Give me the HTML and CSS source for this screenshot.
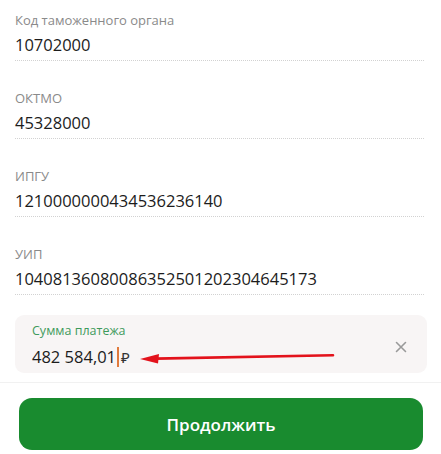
FILE: index.html
```html
<!DOCTYPE html>
<html lang="ru">
<head>
<meta charset="utf-8">
<link rel="stylesheet" href="styles.css">
</head>
<body>
<div class="page">
  <div class="list">
    <div class="field">
      <div class="label">Код таможенного органа</div>
      <div class="value">10702000</div>
    </div>
    <div class="field">
      <div class="label">ОКТМО</div>
      <div class="value">45328000</div>
    </div>
    <div class="field">
      <div class="label">ИПГУ</div>
      <div class="value">1210000000434536236140</div>
    </div>
    <div class="field">
      <div class="label">УИП</div>
      <div class="value">10408136080086352501202304645173</div>
    </div>
  </div>

  <div class="amount">
    <div class="amount-text">
      <div class="amount-label">Сумма платежа</div>
      <div class="amount-value">482 584,01<span class="caret"></span><span class="rub">₽</span></div>
    </div>
    <svg class="clear" width="12" height="12" viewBox="0 0 12 12"><path d="M1.5 1.5 L10.5 10.5 M10.5 1.5 L1.5 10.5" stroke="#9a9a9a" stroke-width="1.6" stroke-linecap="round"/></svg>
    <svg class="arrow" width="200" height="14" viewBox="0 0 200 14"><path d="M16 7.6 L193 4.2" stroke="#e3121b" stroke-width="2.6" stroke-linecap="round"/><path d="M0 8 L19 3 L18 12.5 Z" fill="#e3121b"/></svg>
  </div>

  <div class="divider"></div>

  <div class="actions">
    <button class="btn">Продолжить</button>
  </div>
</div>
</body>
</html>
```

FILE: styles.css
```css
* { box-sizing: border-box; }
html, body { margin: 0; padding: 0; background: #ffffff; }
body {
  font-family: "Open Sans", "Noto Sans", sans-serif;
  width: 441px;
  height: 454px;
  overflow: hidden;
}
.page { display: flex; flex-direction: column; }
.list { padding: 0 17px 0 15px; display: flex; flex-direction: column; }
.field {
  padding: 27px 0 3px 0;
  border-bottom: 1px dotted #d2d2d2;
  display: flex;
  flex-direction: column;
}
.field:first-child { padding-top: 10px; }
.label {
  font-size: 13px;
  line-height: 20px;
  color: #8a8a8a;
}
.value {
  margin-top: 3px;
  font-size: 16.5px;
  line-height: 24px;
  color: #1c1c1c;
}
.amount {
  position: relative;
  margin: 20px 14px 0 15px;
  height: 58px;
  background: #f8f5f5;
  border-radius: 9px;
  padding: 7px 20px 4px 17px;
  display: flex;
  align-items: center;
  justify-content: space-between;
}
.amount-text { display: flex; flex-direction: column; align-self: stretch; }
.amount-label {
  font-size: 12.5px;
  line-height: 18px;
  color: #3f9a5c;
}
.amount-value {
  margin-top: 5px;
  font-size: 16.5px;
  line-height: 24px;
  color: #1c1c1c;
  display: flex;
  align-items: center;
}
.caret {
  display: inline-block;
  width: 2px;
  height: 20px;
  background: #e07a3c;
  margin: 0 2px 0 1px;
}
.rub { font-size: 15px; color: #333; }
.clear { margin-top: 2px; }
.arrow { position: absolute; left: 125px; top: 36px; }
.divider { margin-top: 9px; height: 1px; background: #f1f1f1; }
.actions { padding: 15px 18px 0 19px; }
.btn {
  width: 100%;
  height: 52px;
  border: none;
  border-radius: 13px;
  background: #198b2f;
  color: #ffffff;
  font-family: "Open Sans", "Noto Sans", sans-serif;
  font-size: 17px;
  font-weight: 600;
}
```
